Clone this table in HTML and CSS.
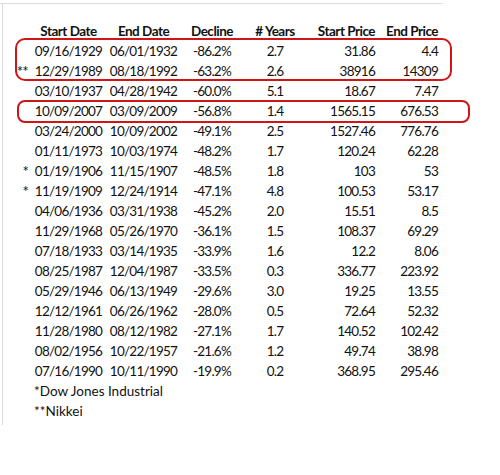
FILE: index.html
```html
<!DOCTYPE html>
<html>
<head>
<meta charset="utf-8">
<link rel="stylesheet" href="styles.css">
</head>
<body>
<div class="sheet">
  <div class="rule"></div>
  <div class="table">
    <div class="mark mark-a"></div>
    <div class="mark mark-b"></div>

    <div class="c star"></div><div class="c ctr h">Start Date</div><div class="c ctr h">End Date</div><div class="c ctr h">Decline</div><div class="c ctr h"># Years</div><div class="c rt h">Start Price</div><div class="c rt h">End Price</div>

    <div class="c star"></div><div class="c ctr">09/16/1929</div><div class="c ctr">06/01/1932</div><div class="c ctr">-86.2%</div><div class="c ctr">2.7</div><div class="c rt">31.86</div><div class="c rt">4.4</div>
    <div class="c star">**</div><div class="c ctr">12/29/1989</div><div class="c ctr">08/18/1992</div><div class="c ctr">-63.2%</div><div class="c ctr">2.6</div><div class="c rt">38916</div><div class="c rt">14309</div>
    <div class="c star"></div><div class="c ctr">03/10/1937</div><div class="c ctr">04/28/1942</div><div class="c ctr">-60.0%</div><div class="c ctr">5.1</div><div class="c rt">18.67</div><div class="c rt">7.47</div>
    <div class="c star"></div><div class="c ctr">10/09/2007</div><div class="c ctr">03/09/2009</div><div class="c ctr">-56.8%</div><div class="c ctr">1.4</div><div class="c rt">1565.15</div><div class="c rt">676.53</div>
    <div class="c star"></div><div class="c ctr">03/24/2000</div><div class="c ctr">10/09/2002</div><div class="c ctr">-49.1%</div><div class="c ctr">2.5</div><div class="c rt">1527.46</div><div class="c rt">776.76</div>
    <div class="c star"></div><div class="c ctr">01/11/1973</div><div class="c ctr">10/03/1974</div><div class="c ctr">-48.2%</div><div class="c ctr">1.7</div><div class="c rt">120.24</div><div class="c rt">62.28</div>
    <div class="c star">*</div><div class="c ctr">01/19/1906</div><div class="c ctr">11/15/1907</div><div class="c ctr">-48.5%</div><div class="c ctr">1.8</div><div class="c rt">103</div><div class="c rt">53</div>
    <div class="c star">*</div><div class="c ctr">11/19/1909</div><div class="c ctr">12/24/1914</div><div class="c ctr">-47.1%</div><div class="c ctr">4.8</div><div class="c rt">100.53</div><div class="c rt">53.17</div>
    <div class="c star"></div><div class="c ctr">04/06/1936</div><div class="c ctr">03/31/1938</div><div class="c ctr">-45.2%</div><div class="c ctr">2.0</div><div class="c rt">15.51</div><div class="c rt">8.5</div>
    <div class="c star"></div><div class="c ctr">11/29/1968</div><div class="c ctr">05/26/1970</div><div class="c ctr">-36.1%</div><div class="c ctr">1.5</div><div class="c rt">108.37</div><div class="c rt">69.29</div>
    <div class="c star"></div><div class="c ctr">07/18/1933</div><div class="c ctr">03/14/1935</div><div class="c ctr">-33.9%</div><div class="c ctr">1.6</div><div class="c rt">12.2</div><div class="c rt">8.06</div>
    <div class="c star"></div><div class="c ctr">08/25/1987</div><div class="c ctr">12/04/1987</div><div class="c ctr">-33.5%</div><div class="c ctr">0.3</div><div class="c rt">336.77</div><div class="c rt">223.92</div>
    <div class="c star"></div><div class="c ctr">05/29/1946</div><div class="c ctr">06/13/1949</div><div class="c ctr">-29.6%</div><div class="c ctr">3.0</div><div class="c rt">19.25</div><div class="c rt">13.55</div>
    <div class="c star"></div><div class="c ctr">12/12/1961</div><div class="c ctr">06/26/1962</div><div class="c ctr">-28.0%</div><div class="c ctr">0.5</div><div class="c rt">72.64</div><div class="c rt">52.32</div>
    <div class="c star"></div><div class="c ctr">11/28/1980</div><div class="c ctr">08/12/1982</div><div class="c ctr">-27.1%</div><div class="c ctr">1.7</div><div class="c rt">140.52</div><div class="c rt">102.42</div>
    <div class="c star"></div><div class="c ctr">08/02/1956</div><div class="c ctr">10/22/1957</div><div class="c ctr">-21.6%</div><div class="c ctr">1.2</div><div class="c rt">49.74</div><div class="c rt">38.98</div>
    <div class="c star"></div><div class="c ctr">07/16/1990</div><div class="c ctr">10/11/1990</div><div class="c ctr">-19.9%</div><div class="c ctr">0.2</div><div class="c rt">368.95</div><div class="c rt">295.46</div>

    <div class="c star"></div><div class="c note">*Dow Jones Industrial</div>
    <div class="c star"></div><div class="c note">**Nikkei</div>
  </div>
</div>
</body>
</html>
```
FILE: styles.css
```css
html, body {
  margin: 0;
  padding: 0;
  background: #ffffff;
}
body {
  font-family: Lato, "Open Sans", sans-serif;
  font-size: 13.5px;
  letter-spacing: -0.75px;
  color: #111111;
  width: 500px;
  height: 475px;
  overflow: hidden;
}
.sheet {
  margin-left: 2px;
  width: 440px;
  height: 422px;
  border-left: 1px solid #dcdcdc;
}
.rule {
  margin-top: 3px;
  margin-left: -3px;
  width: 443px;
  height: 1px;
  background: #dcdcdc;
}
.table {
  position: relative;
  margin-top: 17px;
  margin-left: -3px;
  display: grid;
  grid-template-columns: 30px 77px 73px 64px 62px 71px 63px;
  grid-auto-rows: 20px;
}
.c {
  display: flex;
  align-items: center;
  white-space: nowrap;
}
.h { font-weight: bold; letter-spacing: -0.5px; }
.ctr { justify-content: center; }
.rt { justify-content: flex-end; padding-right: 2px; }
.star { justify-content: flex-end; padding-right: 2px; font-size: 15px; }
.note {
  grid-column: 2 / 8;
  padding-left: 4px;
  letter-spacing: 0;
}
.mark {
  position: absolute;
  border: 2.5px solid #cf1515;
  box-sizing: border-box;
}
.mark-a {
  left: 15px;
  top: 17px;
  width: 437px;
  height: 43px;
  border-radius: 10px;
}
.mark-b {
  left: 17px;
  top: 79px;
  width: 453px;
  height: 23px;
  border-radius: 8px;
}
```
